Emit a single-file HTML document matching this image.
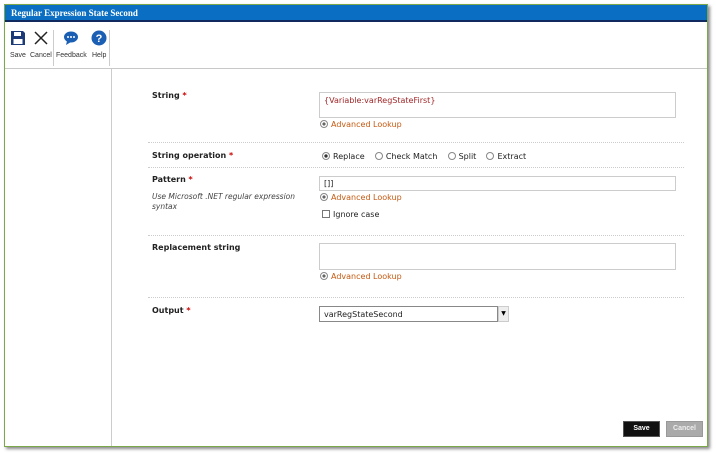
<!DOCTYPE html>
<html><head><style>
body{margin:0;width:716px;height:453px;background:#fff;font-family:"DejaVu Sans","Liberation Sans",sans-serif;position:relative;overflow:hidden}
.win{position:absolute;left:4px;top:4px;width:702px;height:441px;border:1px solid #7aa84a;box-shadow:2px 2px 3px #888;background:#fff}
.title{position:absolute;left:0;top:0;width:702px;height:17px;background:#0a6fc2;border-bottom:2px solid #10295e;color:#fff;font:bold 9px "Liberation Serif",serif;line-height:17px;padding-left:6px;box-sizing:border-box}
.tb{position:absolute;top:19px;left:0;width:702px;height:44px;border-bottom:1px solid #c8c8c8}
.tbi{position:absolute;top:28px;font:7px "Liberation Sans",sans-serif;color:#333}
.side{position:absolute;left:0;top:64px;width:106px;height:377px;border-right:1px solid #ccc}
.lbl{position:absolute;left:152px;font:bold 8px "DejaVu Sans",sans-serif;color:#222}
.lbl b{color:#c00}
.box{position:absolute;left:319px;border:1px solid #ccc;background:#fff;box-sizing:border-box}
.al{position:absolute;left:320px;font-size:8px;color:#c55a11}
.al:before{content:"";display:inline-block;width:6px;height:6px;border:1px solid #888;border-radius:50%;margin-right:3px;vertical-align:-1px;background:radial-gradient(#666 35%,#fff 40%)}
.sep{position:absolute;left:148px;width:536px;border-top:1px dotted #ccc}
.t{position:absolute;font-size:8px;color:#222}
.r{display:inline-block;width:6px;height:6px;border:1px solid #888;border-radius:50%;vertical-align:-1px;margin-right:3px}
</style></head><body>
<div class="win">
<div class="title">Regular Expression State Second</div>
<div class="tb">
<svg style="position:absolute;left:5px;top:6px" width="16" height="16" viewBox="0 0 16 16"><path d="M1 1h12l2 2v12H1z" fill="#1d3a78"/><rect x="4" y="2" width="7" height="4" fill="#fff"/><rect x="3.5" y="9" width="9" height="5" fill="#fff"/></svg>
<div class="tbi" style="left:5px">Save</div>
<svg style="position:absolute;left:29px;top:7px" width="14" height="14"><path d="M1 1L13 13M13 1L1 13" stroke="#222" stroke-width="1.5"/></svg>
<div class="tbi" style="left:25px">Cancel</div>
<div style="position:absolute;left:48px;top:6px;height:36px;border-left:1px solid #ccc"></div>
<svg style="position:absolute;left:58px;top:6px" width="16" height="16"><ellipse cx="8" cy="7" rx="7" ry="5.5" fill="#1a5fb4"/><path d="M4 11L3 15L8 12z" fill="#1a5fb4"/><circle cx="5" cy="7" r="1" fill="#fff"/><circle cx="8" cy="7" r="1" fill="#fff"/><circle cx="11" cy="7" r="1" fill="#fff"/></svg>
<div class="tbi" style="left:51px">Feedback</div>
<svg style="position:absolute;left:86px;top:6px" width="16" height="16"><circle cx="8" cy="8" r="7.5" fill="#1a5fb4"/><text x="8" y="12" font-size="11" font-weight="bold" fill="#fff" text-anchor="middle" font-family="Liberation Sans">?</text></svg>
<div class="tbi" style="left:87px">Help</div>
<div style="position:absolute;left:104px;top:6px;height:36px;border-left:1px solid #ccc"></div>
</div>
<div class="side"></div>
</div>
<div class="lbl" style="top:91px">String <b>*</b></div>
<div class="box" style="top:92px;width:357px;height:26px"><span class="t" style="left:4px;top:3px;color:#a0282a">{Variable:varRegStateFirst}</span></div>
<div class="al" style="top:120px">Advanced Lookup</div>
<div class="sep" style="top:142px"></div>
<div class="lbl" style="top:151px">String operation <b>*</b></div>
<div class="t" style="left:322px;top:152px"><span class="r" style="background:radial-gradient(#333 35%,#fff 45%)"></span>Replace&nbsp;&nbsp;&nbsp; <span class="r"></span>Check Match&nbsp;&nbsp;&nbsp; <span class="r"></span>Split&nbsp;&nbsp;&nbsp; <span class="r"></span>Extract</div>
<div class="sep" style="top:167px"></div>
<div class="lbl" style="top:175px">Pattern <b>*</b></div>
<div class="t" style="left:152px;top:192px;font-style:italic;color:#444;width:170px;line-height:10px;font-size:7.5px">Use Microsoft .NET regular expression syntax</div>
<div class="box" style="top:176px;width:357px;height:15px"><span class="t" style="left:4px;top:2px">[]]</span></div>
<div class="al" style="top:193px">Advanced Lookup</div>
<div class="t" style="left:322px;top:210px"><span style="display:inline-block;width:6px;height:6px;border:1px solid #777;vertical-align:-1px;margin-right:3px"></span>Ignore case</div>
<div class="sep" style="top:235px"></div>
<div class="lbl" style="top:243px">Replacement string</div>
<div class="box" style="top:243px;width:357px;height:27px"></div>
<div class="al" style="top:272px">Advanced Lookup</div>
<div class="sep" style="top:297px"></div>
<div class="lbl" style="top:306px">Output <b>*</b></div>
<div class="box" style="top:306px;width:179px;height:16px;border-color:#888"><span class="t" style="left:4px;top:3px">varRegStateSecond</span></div>
<div style="position:absolute;left:498px;top:306px;width:11px;height:16px;background:#eee;border:1px solid #ccc;box-sizing:border-box;font-size:6px;text-align:center;line-height:14px">▼</div>
<div style="position:absolute;left:623px;top:421px;width:35px;height:14px;background:#111;border:1px solid #555;color:#fff;font:bold 7px 'Liberation Sans',sans-serif;text-align:center;line-height:14px">Save</div>
<div style="position:absolute;left:666px;top:421px;width:35px;height:14px;background:#aaa;border:1px solid #999;color:#eee;font:bold 7px 'Liberation Sans',sans-serif;text-align:center;line-height:14px">Cancel</div>
</body></html>
